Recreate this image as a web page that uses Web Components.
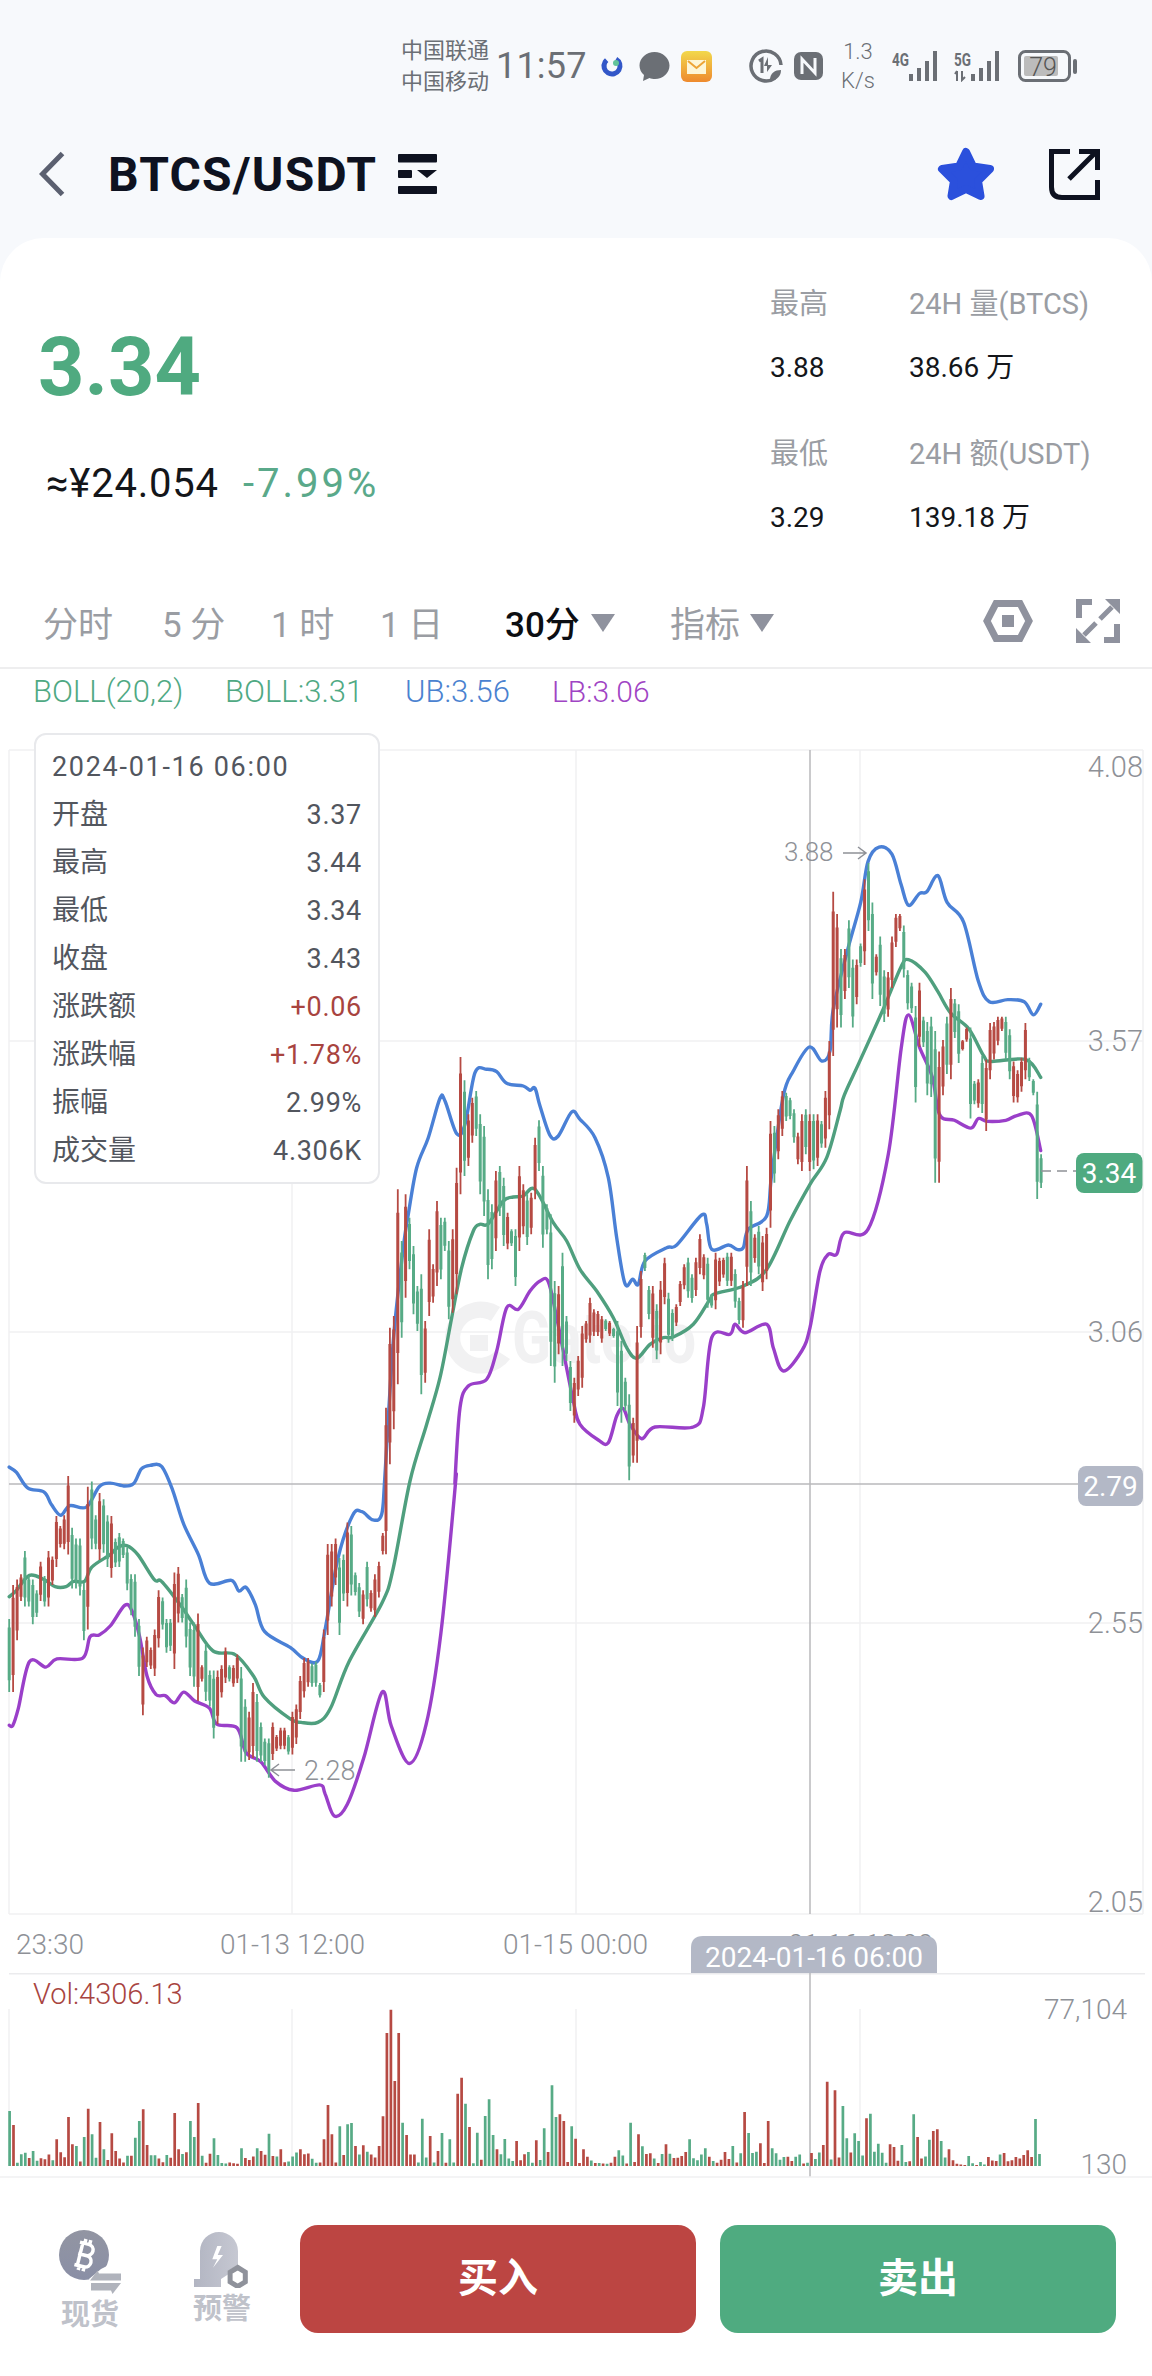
<!DOCTYPE html>
<html lang="zh">
<head>
<meta charset="utf-8">
<title>BTCS/USDT</title>
<style>
  html, body { margin: 0; padding: 0; background: #fff; }
  body { width: 1152px; height: 2376px; overflow: hidden; font-family: Roboto, "Noto Sans CJK SC", sans-serif; }
</style>
</head>
<body>
<status-bar></status-bar>
<nav-bar symbol="BTCS/USDT"></nav-bar>
<ticker-panel></ticker-panel>
<period-tabs></period-tabs>
<boll-legend></boll-legend>
<kline-chart>
  <kline-tooltip date="2024-01-16 06:00">
    <tip-row label="开盘" value="3.37"></tip-row>
    <tip-row label="最高" value="3.44"></tip-row>
    <tip-row label="最低" value="3.34"></tip-row>
    <tip-row label="收盘" value="3.43"></tip-row>
    <tip-row label="涨跌额" value="+0.06" tone="up"></tip-row>
    <tip-row label="涨跌幅" value="+1.78%" tone="up"></tip-row>
    <tip-row label="振幅" value="2.99%"></tip-row>
    <tip-row label="成交量" value="4.306K"></tip-row>
  </kline-tooltip>
</kline-chart>
<volume-chart></volume-chart>
<bottom-bar></bottom-bar>

<script>
const FONT = 'Roboto, "Noto Sans CJK SC", sans-serif';
const RED = '#b64a43';
const GREEN = '#57ab86';

// Curves and candles are traced from crops, so each one keeps the crop's origin and scale.
const crop = (ox, oy, sx, sy) => ([x, y]) => [ox + x / sx, oy + y / sy];
const LEFT = crop(0, 1400, 2.722, 2.8);
const MID = crop(340, 1040, 3, 3);
const RIGHT = crop(576, 780, 2.722, 2.8);

const BLUE_LINE = [
  ...[[25,185],[45,200],[75,243],[120,255],[140,290],[165,320],[190,293],[235,297],[270,240],[300,230],[340,238],[365,230],[385,190],[410,180],[440,183],[470,250],[500,345],[540,430],[570,510],[630,502],[650,532],[670,522],[695,570],[720,645],[790,690],[825,720],[865,728],[885,640],[920,440],[960,320],[985,310],[1015,333]].map(LEFT),
  ...[[125,1420],[135,1300],[160,900],[190,620],[205,520],[230,380],[265,290],[300,172],[315,180],[350,278],[375,250],[405,95],[440,85],[470,92],[500,127],[550,135],[570,148],[585,142],[600,195],[630,283],[655,285],[695,213],[720,235],[765,290],[805,410],[830,590],[855,728],[878,715],[895,730],[915,660],[980,620],[1010,612],[1085,522],[1100,550],[1115,625],[1165,612],[1190,625],[1210,620],[1225,565],[1280,525],[1295,400],[1330,165],[1360,90],[1408,18],[1445,60],[1470,30]].map(MID),
  ...[[700,640],[740,470],[775,340],[795,225],[825,185],[860,205],[885,290],[905,348],[935,315],[955,310],[985,265],[1010,340],[1055,395],[1095,560],[1125,618],[1175,612],[1220,618],[1245,655],[1265,625]].map(RIGHT)
];
const GREEN_LINE = [
  ...[[25,548],[45,530],[80,488],[120,500],[150,520],[180,520],[200,505],[230,505],[250,465],[300,430],[320,410],[345,405],[375,430],[420,500],[440,505],[490,570],[530,630],[580,700],[640,710],[690,770],[720,830],[790,890],[820,900],[865,900],[900,860],[950,730],[1040,565],[1070,470]].map(LEFT),
  ...[[210,1320],[260,1150],[300,1010],[335,830],[365,680],[400,570],[420,550],[445,548],[490,480],[520,468],[550,465],[585,445],[640,545],[680,600],[720,685],[770,750],[820,830],[860,920],[890,952],[930,910],[970,890],[1000,888],[1060,850],[1110,775],[1125,758],[1210,735],[1280,685],[1350,540],[1410,430],[1460,350],[1500,210]].map(MID),
  ...[[730,880],[770,790],[840,630],[885,520],[905,500],[950,535],[985,590],[1020,650],[1070,695],[1110,770],[1130,785],[1225,780],[1265,830]].map(RIGHT)
];
const PURPLE_LINE = [
  ...[[25,908],[35,908],[50,860],[80,730],[125,745],[155,722],[225,720],[245,660],[270,655],[300,630],[340,572],[360,590],[380,660],[400,770],[425,822],[450,825],[475,845],[500,815],[530,840],[570,860],[590,905],[645,915],[670,985],[710,1010],[750,1065],[800,1090],[870,1075],[885,1100],[910,1162],[945,1130],[990,1000],[1040,815],[1065,910],[1115,1015],[1160,905],[1200,650],[1240,230]].map(LEFT),
  ...[[345,1320],[360,1100],[385,1035],[440,1015],[470,930],[500,800],[535,805],[570,750],[600,720],[625,722],[650,830],[700,1080],[720,1150],[775,1197],[805,1205],[830,1125],[850,1103],[870,1150],[905,1193],[945,1158],[1060,1158],[1090,1100],[1115,890],[1170,880],[1185,850],[1215,875],[1280,850],[1300,920],[1330,990],[1385,930],[1410,860],[1440,690],[1465,640],[1490,640]].map(MID),
  ...[[730,1265],[795,1255],[850,1045],[885,750],[905,655],[935,745],[970,830],[990,935],[1030,950],[1075,972],[1095,945],[1120,953],[1170,950],[1200,937],[1240,937],[1265,1035]].map(RIGHT)
];

const CANDLE_ZONES = [
  { map: LEFT, x0: 25, x1: 1042, data: 'G610,815 R515,815 R500,670 R485,560 G420,575 G490,575 G500,625 G530,605 R450,560 G490,575 R420,575 R435,515 R322,465 R350,410 R320,415 R210,430 G355,525 G385,525 G385,545 G510,670 R240,640 G225,415 G320,415 R258,445 G275,425 G320,465 R322,495 G385,465 G370,465 G385,440 G410,530 G485,600 G485,660 G610,770 R690,880 R660,745 R690,750 R640,770 R530,690 G550,640 G610,705 G610,700 R480,750 R465,620 G540,620 G500,690 G620,770 G620,800 R595,840 R740,785 G680,840 G755,855 G755,945 R755,905 R740,830 R690,790 G740,785 R740,800 R710,790 G745,1010 G835,1010 R870,1005 R790,1000 G820,1010 G900,1010 G945,1020 G945,1055 R900,1005 R935,980 R915,975 R915,975 G935,990 R870,990 R850,960 R770,890 R720,830 R720,800 G735,800 G730,800 G790,830 R640,815 R400,655 R400,575 R385,515 G440,655 G430,560 R340,575 G350,545 G480,545 G510,605 R530,625 G450,575 R530,590 R485,605 R450,550 R370,430' },
  { map: MID, x0: 138, x1: 1468, data: 'R1100,1540 R860,1270 R825,1165 R445,1030 G600,890 R460,770 G530,685 G615,820 G735,870 G700,1060 R840,1025 R565,825 R670,785 R480,735 G530,715 G530,630 G600,835 R565,815 R380,760 R48,460 G118,405 R220,375 R170,305 G150,285 G220,460 G255,525 G445,715 G490,685 R390,630 G375,525 G410,615 R515,625 G565,615 G565,735 R375,630 R430,580 G460,612 R455,580 R290,475 G238,390 G375,620 G490,580 G520,975 G720,1025 R735,940 G635,975 G825,960 G960,1110 R1010,1145 R945,1065 R855,1040 R840,905 R770,905 R805,885 R810,885 R825,905 G835,870 R840,885 G860,890 G840,1095 G900,1145 G1010,1110 G1060,1318 R1130,1265 R855,1265 R690,890 G635,690 G735,835 R735,920 G790,955 R720,940 R650,790 G755,905 G805,900 R790,855 R720,795 R670,745 G650,770 G700,785 R650,765 R580,700 R640,715 G650,800 G760,800 R635,805 R650,735 R650,710 G635,735 R635,735 G685,800 G770,850 R720,860 R375,735 G480,735 R580,665 G555,700 R585,750 R560,715 R240,560 G255,425 R205,355 R150,285 G155,240 G170,235 G205,305 R275,370 R220,390 G205,340 R220,390 G220,385 R220,375 G240,320 R150,320 R0,265' },
  { map: RIGHT, x0: 700, x1: 1266, data: 'R310,770 R372,690 G470,690 R470,610 G390,580 G500,690 R500,625 G455,520 R275,515 G230,420 G340,610 R485,545 G435,630 G530,675 R535,660 R435,580 R372,465 R372,420 G405,550 G530,640 G565,650 G630,900 R565,745 G660,745 G675,880 G660,885 G700,1125 R757,1125 R725,880 G660,820 R580,835 G610,720 G625,790 R725,755 R690,730 G690,945 G840,905 R835,915 G770,930 R780,980 R678,835 R675,780 R660,740 R660,700 G660,780 G695,835 R785,900 R810,900 R775,870 R678,835 G775,840 G835,880 G870,1170 G1045,1140' }
];

const VOLUME_PEAKS = 'G13:630 R18:672 G35:755 G45:750 R77:715 R93:648 R99:730 G104:735 G115:708 R119:623 G125:700 R136:663 G142:745 R152:697 R157:750 G183:710 G188:660 R194:625 R199:732 R237:636 R242:745 G258:660 G264:708 R269:606 G291:712 G328:742 G350:742 R355:750 G365:698 R381:745 R408:745 R440:715 R445:612 R451:700 G461:676 G472:670 G477:666 R483:735 R494:733 R515:735 R520:646 R526:396 R531:326 R536:540 R541:396 G547:665 R552:702 G574:653 R585:705 R595:750 G600:696 G611:715 R622:578 R627:530 G632:608 R638:678 G649:695 G659:645 G664:595 G670:702 R675:745 G686:714 R702:720 R713:760 R729:718 G740:682 G750:553 G755:648 R760:640 R766:660 G776:676 R782:713 R792:745 G840:748 G856:665 R867:700 R872:685 G877:736 R904:730 G936:715 G962:742 G1000:735 R1016:633 G1021:696 R1037:727 R1048:660 G1053:742 R1123:732 R1128:542 R1134:484 R1139:568 G1145:615 G1155:712 G1161:697 G1166:720 R1177:652 G1182:665 G1187:638 G1198:728 R1214:730 R1219:738 G1230:732 G1246:640 R1251:708 G1267:716 R1272:690 R1278:685 G1283:720 R1294:745 G1321:765 R1347:768 R1396:748 G1412:654';

// catmull-rom through the traced points
function smoothPath(pts) {
  let d = `M${pts[0][0].toFixed(1)} ${pts[0][1].toFixed(1)}`;
  for (let i = 0; i < pts.length - 1; i++) {
    const p0 = pts[i - 1] || pts[i], p1 = pts[i], p2 = pts[i + 1], p3 = pts[i + 2] || p2;
    const c1 = [p1[0] + (p2[0] - p0[0]) / 6, p1[1] + (p2[1] - p0[1]) / 6];
    const c2 = [p2[0] - (p3[0] - p1[0]) / 6, p2[1] - (p3[1] - p1[1]) / 6];
    d += `C${c1[0].toFixed(1)} ${c1[1].toFixed(1)} ${c2[0].toFixed(1)} ${c2[1].toFixed(1)} ${p2[0].toFixed(1)} ${p2[1].toFixed(1)}`;
  }
  return d;
}

function candlesMarkup() {
  const red = [], green = [];
  CANDLE_ZONES.forEach(zone => {
    const items = zone.data.split(' ');
    items.forEach((item, i) => {
      const [hi, lo] = item.slice(1).split(',').map(Number);
      const rawX = zone.x0 + (zone.x1 - zone.x0) * i / (items.length - 1);
      const [x, top] = zone.map([rawX, hi]);
      const [, bottom] = zone.map([rawX, lo]);
      const h = bottom - top;
      const seg = `M${x.toFixed(1)} ${top.toFixed(1)}V${bottom.toFixed(1)}`;
      const target = item[0] === 'R' ? red : green;
      target.push(seg);
      target.body = (target.body || '') + `M${x.toFixed(1)} ${(top + h * 0.12).toFixed(1)}v${(h * 0.72).toFixed(1)}`;
    });
  });
  return `
    <path d="${green.join('')}" stroke="${GREEN}" stroke-width="1.8" fill="none"/>
    <path d="${green.body}" stroke="${GREEN}" stroke-width="3" fill="none"/>
    <path d="${red.join('')}" stroke="${RED}" stroke-width="1.8" fill="none"/>
    <path d="${red.body}" stroke="${RED}" stroke-width="3" fill="none"/>`;
}

function volumeMarkup() {
  const count = 263, step = 5.35;
  const slots = new Array(count).fill(null);
  VOLUME_PEAKS.split(' ').forEach(p => {
    const [x, top] = p.slice(1).split(':').map(Number);
    slots[Math.round((x - 13) / step)] = { c: p[0], top };
  });
  let seed = 7;
  const rnd = () => (seed = (seed * 16807) % 2147483647) / 2147483647;
  let red = '', green = '';
  slots.forEach((slot, i) => {
    const disp = 13 + i * step;
    const quiet = (disp > 298 && disp < 326) || (disp > 810 && disp < 836) || (disp > 1300 && disp < 1345);
    const bar = slot || { c: rnd() > 0.5 ? 'R' : 'G', top: quiet ? 782 + rnd() * 10 : 752 + rnd() * 36 };
    const x = (disp / 1.361).toFixed(1);
    const top = (1900 + bar.top / 3).toFixed(1);
    const seg = `M${x} ${top}V2165`;
    if (bar.c === 'R') red += seg; else green += seg;
  });
  return `<path d="${green}" stroke="${GREEN}" stroke-width="2.7" fill="none"/>
          <path d="${red}" stroke="${RED}" stroke-width="2.7" fill="none"/>`;
}

// Status bar
class StatusBar extends HTMLElement {
  constructor() { super(); this.attachShadow({ mode: 'open' }); }
  connectedCallback() {
    const signal = `<g fill="#6b6f75">
        <rect x="17" y="24" width="4" height="7"/><rect x="25" y="18" width="4" height="13"/>
        <rect x="33" y="11" width="4" height="20"/><rect x="41" y="1" width="4" height="30"/></g>`;
    this.shadowRoot.innerHTML = `
    <style>
      :host { display: flex; align-items: center; box-sizing: border-box; height: 100px; padding: 32px 0 0 401px; background: #f7f9fc; color: #6b6f75; }
      svg { display: block; flex: none; }
      .carrier { width: 88px; font-size: 22px; line-height: 31px; white-space: nowrap; }
      .time { margin-left: 7px; width: 88px; font-size: 36px; letter-spacing: .2px; white-space: nowrap; }
      .speed { margin-left: 16px; width: 38px; font-size: 22px; line-height: 29px; text-align: center; font-weight: 300; }
      text { font-family: ${FONT}; }
    </style>
    <div class="carrier">中国联通<br>中国移动</div>
    <div class="time">11:57</div>
    <svg style="margin-left:15px" width="26" height="28" viewBox="0 0 26 28">
      <circle cx="13" cy="14" r="8" fill="none" stroke="#3257c8" stroke-width="5" stroke-dasharray="40 10" transform="rotate(-60 13 14)"/>
      <circle cx="17" cy="11" r="3" fill="#62c49a"/>
    </svg>
    <svg style="margin-left:14px" width="31" height="31" viewBox="0 0 31 31">
      <path d="M15.500 1C23.500 1 30.500 7 30.500 14.500S24 28 16 28c-2 0-4-.3-5.500-1L4 30l1-6C2 21.500 .5 18 .5 14.500 .5 7 7.500 1 15.500 1Z" fill="#6b6f75"/>
    </svg>
    <svg style="margin-left:11px" width="31" height="31" viewBox="0 0 31 31">
      <defs><linearGradient id="m" x1="0" y1="0" x2="0" y2="1"><stop offset="0" stop-color="#f2d84c"/><stop offset="1" stop-color="#ee8a2e"/></linearGradient></defs>
      <rect width="31" height="31" rx="6" fill="url(#m)"/>
      <rect x="6" y="9" width="19" height="14" fill="#fdf6d8"/>
      <path d="M7 10l8.500 7 8.500-7" fill="none" stroke="#eda437" stroke-width="2"/>
    </svg>
    <svg style="margin-left:37px" width="34" height="34" viewBox="0 0 34 34">
      <path d="M26 29A15 15 0 1 1 32 16" fill="none" stroke="#6b6f75" stroke-width="3.500"/>
      <path d="M10 12l3-2v14" fill="none" stroke="#6b6f75" stroke-width="3"/>
      <path d="M19 8v8h4l-5 7v-6h-3" fill="#6b6f75"/>
      <path d="M21 31c0-7 5-10 11-10 0 6-4 11-11 10Z" fill="#6b6f75"/>
    </svg>
    <svg style="margin-left:11px" width="29" height="28" viewBox="0 0 29 28">
      <rect width="29" height="28" rx="7" fill="#6b6f75"/>
      <path d="M8 22V7l13 14V6" fill="none" stroke="#f7f9fc" stroke-width="3"/>
    </svg>
    <div class="speed">1.3<br>K/s</div>
    <svg style="margin-left:15px" width="50" height="32" viewBox="0 0 50 32">
      <text x="0" y="16" font-size="18" font-weight="700" fill="#6b6f75" textLength="17" lengthAdjust="spacingAndGlyphs">4G</text>${signal}
    </svg>
    <svg style="margin-left:12px" width="50" height="32" viewBox="0 0 50 32">
      <text x="0" y="16" font-size="18" font-weight="700" fill="#6b6f75" textLength="17" lengthAdjust="spacingAndGlyphs">5G</text>
      <path d="M3 31V21M1 24l2-3M8 21v9l3-3" fill="none" stroke="#6b6f75" stroke-width="2"/>${signal}
    </svg>
    <svg style="margin-left:14px" width="60" height="32" viewBox="0 0 60 32">
      <rect x="1.500" y="1.500" width="50" height="29" rx="6" fill="none" stroke="#6b6f75" stroke-width="3"/>
      <rect x="6" y="6" width="34" height="20" rx="2" fill="#bcbcbc"/>
      <rect x="55" y="9" width="4" height="15" rx="2" fill="#6b6f75"/>
      <text x="25" y="26" font-size="25" font-weight="300" text-anchor="middle" fill="#555">79</text>
    </svg>`;
  }
}
customElements.define('status-bar', StatusBar);

// Title row
class NavBar extends HTMLElement {
  constructor() { super(); this.attachShadow({ mode: 'open' }); }
  connectedCallback() {
    this.shadowRoot.innerHTML = `
    <style>
      :host { display: flex; align-items: center; box-sizing: border-box; height: 138px; padding: 10px 52px 0 39px; background: #f7f9fc; }
      svg { display: block; flex: none; }
      .title { margin-left: 43px; width: 270px; font-size: 48px; font-weight: 700; color: #0e1220; letter-spacing: 1.200px; white-space: nowrap; }
    </style>
    <svg width="26" height="46" viewBox="0 0 26 46"><path d="M23.500 2.500 3.500 23l20 20.500" fill="none" stroke="#5b6070" stroke-width="5"/></svg>
    <div class="title">${this.getAttribute('symbol')}</div>
    <svg style="margin-left:20px" width="39" height="40" viewBox="0 0 39 40">
      <rect width="39" height="8.500" rx="1" fill="#0e1220"/>
      <rect y="16" width="14" height="8" rx="1" fill="#0e1220"/>
      <path d="M19 16h20l-10 8Z" fill="#0e1220"/>
      <rect y="32" width="39" height="8" rx="1" fill="#0e1220"/>
    </svg>
    <svg style="margin-left:auto" width="58" height="54" viewBox="0 0 58 54">
      <path d="M29 5 36 19.500 53 22 41 34 43.500 49 29 42 14.500 49 17 34 5 22 22 19.500Z" fill="#2b50dc" stroke="#2b50dc" stroke-width="8" stroke-linejoin="round"/>
    </svg>
    <svg style="margin-left:54px" width="51" height="51" viewBox="0 0 51 51">
      <path d="M48.500 31V48.500H13Q2.500 48.500 2.500 38V2.500H21" fill="none" stroke="#0e1220" stroke-width="5"/>
      <path d="M20 30 47 3M30 2.500H48.500V21" fill="none" stroke="#0e1220" stroke-width="5"/>
    </svg>`;
  }
}
customElements.define('nav-bar', NavBar);

// One label + value pair of the 24h stats
class StatCell extends HTMLElement {
  constructor() { super(); this.attachShadow({ mode: 'open' }); }
  connectedCallback() {
    this.shadowRoot.innerHTML = `
    <style>
      :host { display: block; line-height: 64px; white-space: nowrap; }
      .label { font-size: 29px; color: #9a9da3; }
      .value { font-size: 28px; color: #14161a; }
    </style>
    <div class="label">${this.getAttribute('label')}</div>
    <div class="value">${this.getAttribute('value')}</div>`;
  }
}
customElements.define('stat-cell', StatCell);

class TickerPanel extends HTMLElement {
  constructor() { super(); this.attachShadow({ mode: 'open' }); }
  connectedCallback() {
    this.shadowRoot.innerHTML = `
    <style>
      :host { display: block; height: 331px; background: #f7f9fc; }
      .card { display: flex; height: 100%; box-sizing: border-box; background: #fff; border-radius: 44px 44px 0 0; }
      .left { flex: 1; padding-left: 38px; }
      .price { margin-top: 80px; height: 100px; line-height: 100px; font-size: 81px; font-weight: 700; color: #4faa80; }
      .sub { margin: 36px 0 0 8px; height: 60px; line-height: 60px; font-size: 40px; letter-spacing: .8px; color: #14161a; white-space: nowrap; }
      .sub span { margin-left: 24px; color: #5aa98a; letter-spacing: 3px; }
      .stats { display: grid; grid-template-columns: 139px 243px; row-gap: 22px; align-content: start; padding: 34px 0 0; }
    </style>
    <div class="card">
      <div class="left">
        <div class="price">3.34</div>
        <div class="sub">≈¥24.054<span>-7.99%</span></div>
      </div>
      <div class="stats">
        <stat-cell label="最高" value="3.88"></stat-cell>
        <stat-cell label="24H 量(BTCS)" value="38.66 万"></stat-cell>
        <stat-cell label="最低" value="3.29"></stat-cell>
        <stat-cell label="24H 额(USDT)" value="139.18 万"></stat-cell>
      </div>
    </div>`;
  }
}
customElements.define('ticker-panel', TickerPanel);

class PeriodTabs extends HTMLElement {
  constructor() { super(); this.attachShadow({ mode: 'open' }); }
  connectedCallback() {
    const tri = ml => `<svg style="margin-left:${ml}px;transform:translateY(2px)" width="24" height="18" viewBox="0 0 24 18"><path d="M0 0h24L12 18Z" fill="#8f929e"/></svg>`;
    this.shadowRoot.innerHTML = `
    <style>
      :host { display: flex; align-items: center; box-sizing: border-box; height: 100px; padding: 6px 0 0 43px; border-bottom: 2px solid #eeeeef; font-size: 35px; color: #9a9da3; white-space: nowrap; }
      svg { display: block; flex: none; }
      span { display: block; flex: none; }
      .on { color: #0c0e12; font-weight: 500; }
    </style>
    <span style="width:119px">分时</span>
    <span style="width:109px">5 分</span>
    <span style="width:109px">1 时</span>
    <span style="width:125px">1 日</span>
    <span class="on" style="width:73px">30分</span>
    ${tri(13)}
    <span style="margin-left:55px;width:70px">指标</span>
    ${tri(10)}
    <svg style="margin-left:209px" width="50" height="42" viewBox="0 0 50 42">
      <path d="M13 3.500H37L46 21 37 38.500H13L4 21Z" fill="none" stroke="#8f929e" stroke-width="7"/>
      <rect x="19" y="15" width="12" height="12" fill="#8f929e"/>
    </svg>
    <svg style="margin-left:43px" width="44" height="44" viewBox="0 0 44 44">
      <path d="M3 19V3H16M41 25V41H28" fill="none" stroke="#8f929e" stroke-width="6"/>
      <path d="M29 0H44V15ZM15 44H0V29Z" fill="#8f929e"/>
      <path d="M24 20 36 8M20 24 8 36" fill="none" stroke="#8f929e" stroke-width="5"/>
    </svg>`;
  }
}
customElements.define('period-tabs', PeriodTabs);

class BollLegend extends HTMLElement {
  constructor() { super(); this.attachShadow({ mode: 'open' }); }
  connectedCallback() {
    this.shadowRoot.innerHTML = `
    <style>
      :host { display: flex; height: 52px; padding-left: 33px; font-size: 31px; font-weight: 300; line-height: 46px; white-space: nowrap; }
      span { display: block; flex: none; }
    </style>
    <span style="width:192px;color:#4fa983">BOLL(20,2)</span>
    <span style="width:180px;color:#4fa983">BOLL:3.31</span>
    <span style="width:147px;color:#4a82d0">UB:3.56</span>
    <span style="font-size:30px;color:#a044c4">LB:3.06</span>`;
  }
}
customElements.define('boll-legend', BollLegend);

class KlineChart extends HTMLElement {
  constructor() { super(); this.attachShadow({ mode: 'open' }); }
  connectedCallback() {
    const gridY = [749, 1040, 1331, 1622, 1913];
    const gridX = [9, 292, 576, 860, 1143];
    const grid = gridY.map(y => `<path d="M9 ${y}H1143"/>`).join('') + gridX.map(x => `<path d="M${x} 749V1913"/>`).join('');
    const priceLabels = [['4.08', 766], ['3.57', 1040], ['3.06', 1331], ['2.55', 1622], ['2.05', 1901]]
      .map(([v, y]) => `<text x="1143" y="${y}" dy=".36em" text-anchor="end" class="axis">${v}</text>`).join('');
    this.shadowRoot.innerHTML = `
    <style>
      :host { display: block; position: relative; height: 1252px; }
      svg { display: block; }
      text { font-family: ${FONT}; }
      .grid path { stroke: #f1f1f2; stroke-width: 1.500; fill: none; }
      .axis { font-size: 29px; fill: #8e9197; font-weight: 300; }
      .note { font-size: 26px; fill: #8e9197; font-weight: 300; }
      .tag { font-size: 28px; fill: #fff; }
      ::slotted(kline-tooltip) { position: absolute; left: 34px; top: 12px; }
    </style>
    <svg width="1152" height="1252" viewBox="0 720 1152 1252">
      <g class="grid">${grid}</g>
      <g fill="#f1f1f2">
        <path d="M500 1306a36 36 0 1 0 10 52l-14-9a20 20 0 1 1-5-29Z"/>
        <rect x="470" y="1334" width="18" height="16"/>
        <text x="512" y="1362" font-size="72" font-weight="700" textLength="184" lengthAdjust="spacingAndGlyphs">Gate.io</text>
      </g>
      <path d="M9 1483H1078" stroke="#b9b9bb" stroke-width="1.500"/>
      <path d="M810 749V1913" stroke="#b9b9bb" stroke-width="1.500"/>
      <g fill="none" stroke-linejoin="round" stroke-linecap="round" stroke-width="3.400">
        <path d="${smoothPath(BLUE_LINE)}" stroke="#4a80d6"/>
        <path d="${smoothPath(GREEN_LINE)}" stroke="#4f9f7e"/>
        <path d="${smoothPath(PURPLE_LINE)}" stroke="#9a3fc9"/>
      </g>
      ${candlesMarkup()}
      ${priceLabels}
      <text x="784" y="851" dy=".36em" class="note">3.88</text>
      <path d="M843 852H866M858 846l8 6-8 6" fill="none" stroke="#8e9197" stroke-width="1.500"/>
      <path d="M271 1769H295M279 1763l-8 6 8 6" fill="none" stroke="#8e9197" stroke-width="1.500"/>
      <text x="304" y="1769" dy=".36em" class="note" style="font-size:27px">2.28</text>
      <path d="M1041 1170H1076" stroke="#8e9197" stroke-width="1.500" stroke-dasharray="10 6"/>
      <rect x="1076" y="1152" width="66.500" height="40" rx="8" fill="#4faa80"/>
      <text x="1109" y="1172" dy=".36em" text-anchor="middle" class="tag">3.34</text>
      <rect x="1078" y="1465" width="65" height="40" rx="8" fill="#b3b8c6"/>
      <text x="1110.500" y="1485" dy=".36em" text-anchor="middle" class="tag">2.79</text>
      <g class="axis" style="font-size:28px">
        <text x="16" y="1943" dy=".36em">23:30</text>
        <text x="220" y="1943" dy=".36em">01-13 12:00</text>
        <text x="503" y="1943" dy=".36em">01-15 00:00</text>
        <text x="788" y="1943" dy=".36em">01-16 18:00</text>
      </g>
      <path d="M703 1935H925Q937 1935 937 1947V1972H691V1947Q691 1935 703 1935Z" fill="#b3b8c6"/>
      <text x="814" y="1956" dy=".36em" text-anchor="middle" class="tag">2024-01-16 06:00</text>
    </svg>
    <slot></slot>`;
  }
}
customElements.define('kline-chart', KlineChart);

class KlineTooltip extends HTMLElement {
  constructor() { super(); this.attachShadow({ mode: 'open' }); }
  connectedCallback() {
    this.shadowRoot.innerHTML = `
    <style>
      :host { display: block; box-sizing: border-box; width: 346px; height: 451px; padding: 8px 16px 0; background: #fff; border: 2px solid #e8e9ec; border-radius: 12px; color: #52565e; }
      .date { height: 48px; line-height: 48px; font-size: 27px; letter-spacing: 1.700px; white-space: nowrap; }
    </style>
    <div class="date">${this.getAttribute('date')}</div>
    <slot></slot>`;
  }
}
customElements.define('kline-tooltip', KlineTooltip);

class TipRow extends HTMLElement {
  constructor() { super(); this.attachShadow({ mode: 'open' }); }
  connectedCallback() {
    const up = this.getAttribute('tone') === 'up';
    this.shadowRoot.innerHTML = `
    <style>
      :host { display: flex; justify-content: space-between; height: 48px; line-height: 48px; font-size: 28px; white-space: nowrap; }
      .v { font-size: 27px; letter-spacing: .7px; color: ${up ? '#a8443f' : 'inherit'}; }
    </style>
    <span>${this.getAttribute('label')}</span><span class="v">${this.getAttribute('value')}</span>`;
  }
}
customElements.define('tip-row', TipRow);

class VolumeChart extends HTMLElement {
  constructor() { super(); this.attachShadow({ mode: 'open' }); }
  connectedCallback() {
    const vertical = [9, 292, 576, 860].map(x => `<path d="M${x} 2008V2165"/>`).join('');
    this.shadowRoot.innerHTML = `
    <style>
      :host { display: block; height: 212px; }
      svg { display: block; }
      text { font-family: ${FONT}; }
      .grid path { stroke: #f1f1f2; stroke-width: 1.500; fill: none; }
      .axis { font-size: 28px; fill: #8e9197; font-weight: 300; }
    </style>
    <svg width="1152" height="212" viewBox="0 1972 1152 212">
      <path d="M9 1972.800H1145" stroke="#ebebed" stroke-width="1.500"/>
      <g class="grid">${vertical}</g>
      <path d="M810 1972V2176" stroke="#b9b9bb" stroke-width="1.500"/>
      <text x="33" y="1993" dy=".36em" font-size="29" fill="#a8443f" font-weight="300">Vol:4306.13</text>
      <text x="1127" y="2008" dy=".36em" text-anchor="end" class="axis">77,104</text>
      <path d="M0 2176H1152" stroke="#f1f1f2" stroke-width="1.500"/>
      ${volumeMarkup()}
      <text x="1127" y="2163" dy=".36em" text-anchor="end" class="axis">130</text>
    </svg>`;
  }
}
customElements.define('volume-chart', VolumeChart);

class BottomBar extends HTMLElement {
  constructor() { super(); this.attachShadow({ mode: 'open' }); }
  connectedCallback() {
    this.shadowRoot.innerHTML = `
    <style>
      :host { display: flex; align-items: flex-start; box-sizing: border-box; height: 192px; padding: 40px 36px 0 24px; }
      svg { display: block; }
      .item { display: flex; flex-direction: column; align-items: center; width: 132px; color: #bfc2ca; font-size: 29px; font-weight: 700; line-height: 36px; }
      .item div { margin-top: 3px; }
      .btn { flex: none; width: 396px; height: 108px; line-height: 108px; text-align: center; border-radius: 18px; color: #fff; font-size: 40px; font-weight: 700; }
      .buy { margin-left: 12px; background: #bc4542; }
      .sell { margin-left: 24px; background: #4fab80; }
    </style>
    <div class="item" style="padding-top:5px">
      <svg width="66" height="64" viewBox="0 0 66 64">
        <defs><linearGradient id="b" x1="0" y1="0" x2="0" y2="1"><stop offset="0" stop-color="#9295a2"/><stop offset="1" stop-color="#8a8fa6"/></linearGradient></defs>
        <circle cx="27" cy="25" r="25" fill="url(#b)"/>
        <path d="M44 39 32 49l8 15h26V36H50Z" fill="#fff"/>
        <g transform="rotate(14 27 25)" fill="none" stroke="#fff" stroke-width="3.500">
          <path d="M20 13.500h9a5.500 5.500 0 0 1 0 11.500h-8m0 0h9.500a5.800 5.800 0 0 1 0 11.500H20M23 13.500V36.500M25 9v4M30 9v4M25 37v4M30 37v4"/>
        </g>
        <path d="M33 50.500 40.500 40.500 42 43.500H64V50.500Z" fill="#b0b3bc"/>
        <path d="M34 53H64L55.500 64 54 60.500H34Z" fill="#b0b3bc"/>
      </svg>
      <div>现货</div>
    </div>
    <div class="item" style="padding-top:7px">
      <svg width="56" height="56" viewBox="0 0 56 56">
        <defs><linearGradient id="w" x1="0" y1="0" x2="1" y2="0"><stop offset="0" stop-color="#b2b5c2"/><stop offset="1" stop-color="#c6c8d2"/></linearGradient></defs>
        <path d="M0 55V47H6V19A19 19 0 0 1 44 19V36L27 47V55Z" fill="url(#w)"/>
        <path d="M23.300 14 18.300 27.300H23.300L19 35.700 29 23H23.700L27.700 14Z" fill="#fff"/>
        <path d="M43.700 33 53.500 39V51L43.700 57 33.900 51V39Z" fill="#fff"/>
        <path d="M43.700 35.500 51.300 40.200V49.800L43.700 54.500 36.100 49.800V40.200Z" fill="none" stroke="#8f929b" stroke-width="5"/>
      </svg>
      <div>预警</div>
    </div>
    <div class="btn buy">买入</div>
    <div class="btn sell">卖出</div>`;
  }
}
customElements.define('bottom-bar', BottomBar);
</script>
</body>
</html>
